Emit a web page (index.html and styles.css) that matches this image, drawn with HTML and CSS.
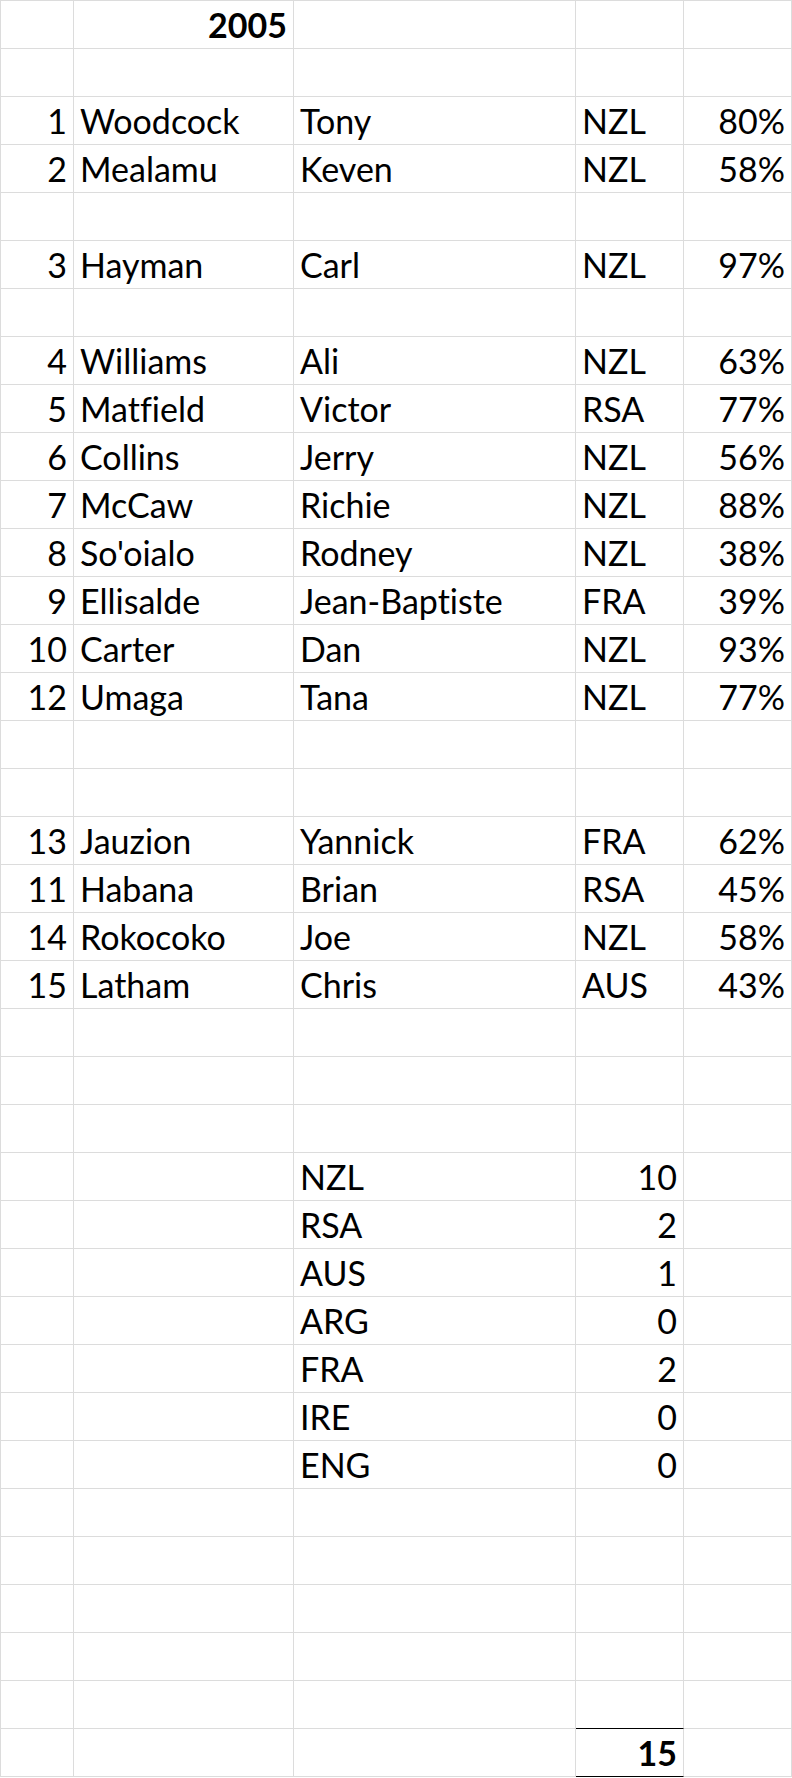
FILE: index.html
```html
<!DOCTYPE html>
<html lang="en">
<head>
<meta charset="utf-8">
<title>2005</title>
<link rel="stylesheet" href="styles.css">
</head>
<body>
<div class="sheet">
  <div class="c"></div><div class="c n b">2005</div><div class="c"></div><div class="c"></div><div class="c"></div>
  <div class="c"></div><div class="c"></div><div class="c"></div><div class="c"></div><div class="c"></div>
  <div class="c n">1</div><div class="c">Woodcock</div><div class="c">Tony</div><div class="c">NZL</div><div class="c n">80%</div>
  <div class="c n">2</div><div class="c">Mealamu</div><div class="c">Keven</div><div class="c">NZL</div><div class="c n">58%</div>
  <div class="c"></div><div class="c"></div><div class="c"></div><div class="c"></div><div class="c"></div>
  <div class="c n">3</div><div class="c">Hayman</div><div class="c">Carl</div><div class="c">NZL</div><div class="c n">97%</div>
  <div class="c"></div><div class="c"></div><div class="c"></div><div class="c"></div><div class="c"></div>
  <div class="c n">4</div><div class="c">Williams</div><div class="c">Ali</div><div class="c">NZL</div><div class="c n">63%</div>
  <div class="c n">5</div><div class="c">Matfield</div><div class="c">Victor</div><div class="c">RSA</div><div class="c n">77%</div>
  <div class="c n">6</div><div class="c">Collins</div><div class="c">Jerry</div><div class="c">NZL</div><div class="c n">56%</div>
  <div class="c n">7</div><div class="c">McCaw</div><div class="c">Richie</div><div class="c">NZL</div><div class="c n">88%</div>
  <div class="c n">8</div><div class="c">So'oialo</div><div class="c">Rodney</div><div class="c">NZL</div><div class="c n">38%</div>
  <div class="c n">9</div><div class="c">Ellisalde</div><div class="c">Jean-Baptiste</div><div class="c">FRA</div><div class="c n">39%</div>
  <div class="c n">10</div><div class="c">Carter</div><div class="c">Dan</div><div class="c">NZL</div><div class="c n">93%</div>
  <div class="c n">12</div><div class="c">Umaga</div><div class="c">Tana</div><div class="c">NZL</div><div class="c n">77%</div>
  <div class="c"></div><div class="c"></div><div class="c"></div><div class="c"></div><div class="c"></div>
  <div class="c"></div><div class="c"></div><div class="c"></div><div class="c"></div><div class="c"></div>
  <div class="c n">13</div><div class="c">Jauzion</div><div class="c">Yannick</div><div class="c">FRA</div><div class="c n">62%</div>
  <div class="c n">11</div><div class="c">Habana</div><div class="c">Brian</div><div class="c">RSA</div><div class="c n">45%</div>
  <div class="c n">14</div><div class="c">Rokocoko</div><div class="c">Joe</div><div class="c">NZL</div><div class="c n">58%</div>
  <div class="c n">15</div><div class="c">Latham</div><div class="c">Chris</div><div class="c">AUS</div><div class="c n">43%</div>
  <div class="c"></div><div class="c"></div><div class="c"></div><div class="c"></div><div class="c"></div>
  <div class="c"></div><div class="c"></div><div class="c"></div><div class="c"></div><div class="c"></div>
  <div class="c"></div><div class="c"></div><div class="c"></div><div class="c"></div><div class="c"></div>
  <div class="c"></div><div class="c"></div><div class="c">NZL</div><div class="c n">10</div><div class="c"></div>
  <div class="c"></div><div class="c"></div><div class="c">RSA</div><div class="c n">2</div><div class="c"></div>
  <div class="c"></div><div class="c"></div><div class="c">AUS</div><div class="c n">1</div><div class="c"></div>
  <div class="c"></div><div class="c"></div><div class="c">ARG</div><div class="c n">0</div><div class="c"></div>
  <div class="c"></div><div class="c"></div><div class="c">FRA</div><div class="c n">2</div><div class="c"></div>
  <div class="c"></div><div class="c"></div><div class="c">IRE</div><div class="c n">0</div><div class="c"></div>
  <div class="c"></div><div class="c"></div><div class="c">ENG</div><div class="c n">0</div><div class="c"></div>
  <div class="c"></div><div class="c"></div><div class="c"></div><div class="c"></div><div class="c"></div>
  <div class="c"></div><div class="c"></div><div class="c"></div><div class="c"></div><div class="c"></div>
  <div class="c"></div><div class="c"></div><div class="c"></div><div class="c"></div><div class="c"></div>
  <div class="c"></div><div class="c"></div><div class="c"></div><div class="c"></div><div class="c"></div>
  <div class="c"></div><div class="c"></div><div class="c"></div><div class="c above-total"></div><div class="c"></div>
  <div class="c"></div><div class="c"></div><div class="c"></div><div class="c n b total">15</div><div class="c"></div>
</div>
</body>
</html>
```

FILE: styles.css
```css
html, body {
  margin: 0;
  padding: 0;
  background: #ffffff;
}

.sheet {
  display: grid;
  grid-template-columns: 73px 220px 282px 108px 108px;
  grid-auto-rows: 48px;
  width: 792px;
  box-sizing: border-box;
  border-left: 1px solid #dcdcdc;
  border-top: 1px solid #dcdcdc;
  font-family: Lato, "Open Sans", sans-serif;
  font-size: 34px;
  font-variant-ligatures: none;
  font-feature-settings: "liga" 0, "clig" 0;
  color: #000000;
}

.c {
  box-sizing: border-box;
  border-right: 1px solid #dcdcdc;
  border-bottom: 1px solid #dcdcdc;
  display: flex;
  align-items: flex-end;
  justify-content: flex-start;
  padding: 0 6px 3px 6px;
  white-space: nowrap;
  overflow: visible;
}

.n {
  justify-content: flex-end;
}

.b {
  font-weight: bold;
}

.above-total {
  border-bottom-color: #000000;
}

.total {
  border-bottom-color: #000000;
}
```
